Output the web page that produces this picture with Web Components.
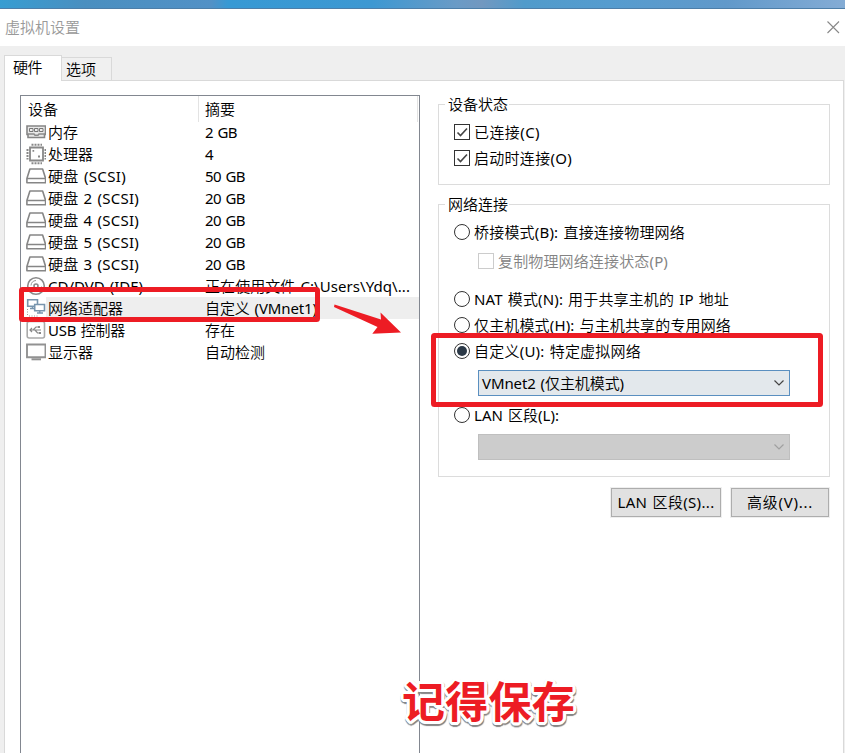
<!DOCTYPE html>
<html lang="zh-CN"><head><meta charset="utf-8"><title>虚拟机设置</title>
<style>
html,body{margin:0;width:845px;height:753px;overflow:hidden}
body{font:15px/22px "Noto Sans","Noto Sans CJK SC DemiLight","Noto Sans CJK SC",sans-serif;word-spacing:1px;color:#000;background:#efefef}
</style></head><body>
<vm-settings></vm-settings>
<script>
const define=(name,css,html,after)=>customElements.define(name,class extends HTMLElement{
  connectedCallback(){
    if(this.shadowRoot)return;
    const r=this.attachShadow({mode:'open'});
    r.innerHTML='<style>*{box-sizing:border-box}'+css+'</style>'+(typeof html==='function'?html(this):html);
    if(after)after(this,r);
  }
});
/* Text run tracked to a given width */
define('fit-text',':host{display:inline-block;white-space:pre;flex:none}span{display:inline-block}','<span><slot></slot></span>',(h,r)=>{
  const w=+h.getAttribute('w'),s=r.querySelector('span');
  if(!w)return;
  h.style.width=w+'px';
  s.style.letterSpacing=(w-s.getBoundingClientRect().width)/[...h.textContent].length+'px';
});
const icons={
mem:`<path d="M1 5h18.500v8.500h-1v3H2v-3H1z" fill="#e8e8e8" stroke="#858585" stroke-width="1.600"/><path d="M3.500 7.500h3.500v3H3.500zM8.500 7.500h3.500v3H8.500zM13.500 7.500h3.500v3h-3.500z" fill="#eee" stroke="#777"/><path d="M2 13h6l1 1.200h3l1-1.200h6" fill="none" stroke="#8b8b8b" stroke-width="1.500"/>`,
cpu:`<path d="M4 4.500h13v13H4z" fill="#fff" stroke="#888" stroke-width="1.800"/><path d="M5.500 1.700h10.500M5.500 20.300h10.500" stroke="#888" stroke-width="2" stroke-dasharray="2 1"/><path d="M1.500 6v10.500M19.500 6v10.500" stroke="#888" stroke-width="2" stroke-dasharray="2 1"/><path d="M6.500 7h1.700v1.700H6.500zM12 12.500h2v2h-2z" fill="#888"/>`,
disk:`<path d="M3.900 4h12.700l3 9.500v4.200H.900v-4.200z" fill="#fff" stroke="#868686" stroke-width="1.600" stroke-linejoin="round"/><path d="M1 13.500h18.500" stroke="#868686" stroke-width="1.500"/>`,
cd:`<circle cx="10" cy="11" r="8.300" fill="#fff" stroke="#8a8a8a" stroke-width="1.600"/><circle cx="10" cy="11" r="2" fill="none" stroke="#8a8a8a" stroke-width="1.600"/><path d="M5 10.500a5.500 5.500 0 0 1 5-5M15.500 11.500a5.500 5.500 0 0 1-5 5" fill="none" stroke="#999"/>`,
net:`<path d="M1.700 2.700h9.800v6.500H1.700z" fill="#fff" stroke="#7794ad" stroke-width="1.600"/><path d="M4 11.500h5M6.500 9v2.500" stroke="#7794ad" stroke-width="1.500"/><path d="M8.700 7.500h9.800v6.200H8.700zM11 16h6M13.700 14v2" fill="#fff" stroke="#7794ad" stroke-width="1.600"/><path d="M1.500 12v7M3 19h10" stroke="#999" stroke-dasharray="1 1.500"/>`,
usb:`<rect x="1.200" y="2.500" width="17.300" height="16.500" rx="2" fill="#fff" stroke="#aaa" stroke-width="1.600"/><path d="M4 11h11M7 11l3-3h3M9 11l2.500 3h2M6 9l-2 2 2 2" fill="none" stroke="#888" stroke-width="1.200"/><path d="M12 7h2v2h-2zM13 13h2v2h-2z" fill="#888"/>`,
mon:`<path d="M1 3.500h18.500v12.700H1z" fill="#fff" stroke="#929292" stroke-width="1.900"/><path d="M5.500 18.300h9.500" stroke="#929292" stroke-width="2"/>`};
define('device-row',`:host{display:grid;grid-template-columns:27px 157px 214px;height:22px;line-height:22px}
.i{padding-left:5px}svg{display:block}.n,.s{display:flex}:host([selected]) .n,:host([selected]) .s{background:#eee}:host([selected]) .n{margin-left:-2px;padding-left:2px}`,
h=>`<div class="i"><svg width="20" height="22" viewBox="0 0 20 22">${icons[h.getAttribute('icon')]}</svg></div><div class="n"><fit-text w="${h.getAttribute('nw')}">${h.getAttribute('name')}</fit-text></div><div class="s"><fit-text w="${h.getAttribute('sw')}">${h.getAttribute('summary')}</fit-text></div>`);
const rows=[['mem','内存',30,'2 GB',32],['cpu','处理器',45,'4',9],['disk','硬盘 (SCSI)',78,'50 GB',40],['disk','硬盘 2 (SCSI)',91,'20 GB',40],['disk','硬盘 4 (SCSI)',91,'20 GB',40],['disk','硬盘 5 (SCSI)',91,'20 GB',40],['disk','硬盘 3 (SCSI)',91,'20 GB',40],['cd','CD/DVD (IDE)',95,'正在使用文件 C:\\Users\\Ydq\\...',205],['net','网络适配器',75,'自定义 (VMnet1)',112],['usb','USB 控制器',77,'存在',30],['mon','显示器',45,'自动检测',60]];
define('device-list',`:host{display:block;width:400px;height:680px;border:1px solid #828790;background:#fff}
.h{display:grid;grid-template-columns:178px 219px;height:25px;line-height:26px}.h div{border-right:1px solid #e3e3e3;padding-left:7px}.h div+div{padding-left:6px}`,
`<div class="h"><div><fit-text w="30">设备</fit-text></div><div><fit-text w="30">摘要</fit-text></div></div>`+rows.map(r=>`<device-row icon="${r[0]}" name="${r[1]}" nw="${r[2]}" summary="${r[3]}" sw="${r[4]}" ${r[0]=='net'?'selected':''}></device-row>`).join(''));
define('title-bar',`:host{display:flex;justify-content:space-between;height:37px;padding:7px 5px 0 5px;background:#fff;color:#999}svg{margin-top:4px}`,
`<fit-text w="75">虚拟机设置</fit-text><svg width="14" height="14"><path d="M1.500 1.500l11.500 11.500M13 1.500L1.500 13" stroke="#888" stroke-width="1.100"/></svg>`);
define('tab-strip',`:host{display:flex;align-items:flex-end;height:34px;padding-left:4px}div{border:1px solid #d9d9d9}.a{width:58px;height:26px;border-bottom:0;background:#fff;padding:0 0 0 8px;z-index:1;margin-bottom:-1px}.b{width:50px;height:23px;border-left:0;border-bottom:0;padding:0 0 0 4px;background:#f0f0f0}`,
`<div class="a"><fit-text w="29">硬件</fit-text></div><div class="b"><fit-text w="30">选项</fit-text></div>`);
define('group-box',`:host{display:block;border:1px solid #dcdcdc;width:392px}.l{display:block;width:64px;background:#fff;margin:-12px 0 0 6px;padding-left:3px;height:22px}`,
h=>`<div class="l"><fit-text w="60">${h.getAttribute('legend')}</fit-text></div><slot></slot>`);
define('check-box',`:host{display:flex;align-items:center;height:26px;padding-left:15px}:host([disabled]){padding-left:39px;color:#838383}.b{width:16px;height:16px;border:1px solid #333;margin-right:4px;flex:none}:host([disabled]) .b{border-color:#ccc}svg{display:block}`,
h=>`<div class="b">${h.hasAttribute('checked')?'<svg width="14" height="14"><path d="M2.500 7.500l3 3L12 3.500" fill="none" stroke="#444" stroke-width="1.600"/></svg>':''}</div><slot></slot>`);
define('radio-button',`:host{display:flex;align-items:center;height:26px;padding-left:15px}.b{display:flex;align-items:center;justify-content:center;width:16px;height:16px;border:1px solid #333;border-radius:50%;margin-right:4px;flex:none}i{width:10px;height:10px;border-radius:50%;background:#2b3947}`,
h=>`<div class="b">${h.hasAttribute('checked')?'<i></i>':''}</div><slot></slot>`);
define('drop-down',`:host{display:flex;align-items:center;justify-content:space-between;margin-left:39px;width:312px;height:26px;border:1px solid #5a8fc0;background:#e3e8ec;padding:0 5px 0 3px;color:#000}:host([disabled]){background:#ccc;border-color:#bfbfbf}svg{margin-left:auto}`,
h=>`<slot></slot><svg width="10" height="6"><path d="M.500 .500L5 5 9.500 .500" fill="none" stroke="${h.hasAttribute('disabled')?'#a0a0a0':'#444'}" stroke-width="1.200"/></svg>`);
define('push-button',`:host{display:flex;align-items:center;justify-content:center;height:29px;border:1px solid #adadad;background:#e1e1e1;box-shadow:0 0 0 1px #efefef;padding-bottom:1px}`,'<slot></slot>');
define('mark-layer',`:host{position:absolute;inset:0;pointer-events:none}svg{position:absolute;left:0;top:0}.c{position:absolute;left:402px;top:674px;font:bold 43px/50px "Noto Sans CJK SC",sans-serif;color:#ed1c24}
.c fit-text{text-shadow:${Array.from({length:16},(_,i)=>`${(3*Math.cos(i*Math.PI/8)).toFixed(1)}px ${(3*Math.sin(i*Math.PI/8)).toFixed(1)}px 0 #fff`).join()},${Array.from({length:16},(_,i)=>`${(3*Math.cos(i*Math.PI/8)+.5).toFixed(1)}px ${(3*Math.sin(i*Math.PI/8)+1.5).toFixed(1)}px 1px #888`).join()}}`,
`<svg width="845" height="753"><g fill="none" stroke="#ed1c24" stroke-width="5"><rect x="21.500" y="289.500" width="296" height="30" rx="1"/><rect x="433.500" y="335.500" width="387" height="69" rx="1"/></g><path d="M334.500 304.500L381 319.500 380.500 312.500 401 332.500 372.300 333.700 377.500 327 334 307z" fill="#ed1c24"/></svg><div class="c"><fit-text w="173">记得保存</fit-text></div>`);
define('vm-settings',`:host{display:block;position:relative;width:845px;height:753px;overflow:hidden}
.sky{height:9px;background:linear-gradient(transparent 7.500px,#4d7ea8 8px),linear-gradient(90deg,#379dd2 0,#4a8fc0 10%,#5291c6 25%,#3799d4 27%,#3d98d2 44%,#6a9bc6 54%,#7298c0 57%,#519bcb 62%,#559ccf 72%,#6199ca 86%,#84acd5)}
.page{display:flex;gap:18px;margin-left:4px;width:840px;height:674px;border:1px solid #d9d9d9;background:#fff;padding:14px 0 0 15px}
.right{width:392px;padding-top:9px}.g1{height:81px}.g1 check-box:first-child{margin-top:4px}.g2{height:273px;margin-top:19px}
.buttons{display:flex;justify-content:flex-end;gap:10px;margin-top:11px;padding-right:1px}`,
`<div class="sky"></div><title-bar></title-bar><tab-strip></tab-strip><div class="page"><device-list></device-list><div class="right">
<group-box class="g1" legend="设备状态"><check-box checked><fit-text w="66">已连接(C)</fit-text></check-box><check-box checked><fit-text w="98">启动时连接(O)</fit-text></check-box></group-box>
<group-box class="g2" legend="网络连接"><radio-button style="margin-top:4px"><fit-text w="211">桥接模式(B): 直接连接物理网络</fit-text></radio-button>
<check-box disabled style="margin-top:3px"><fit-text w="170">复制物理网络连接状态(P)</fit-text></check-box>
<radio-button style="margin-top:12px"><fit-text w="255">NAT 模式(N): 用于共享主机的 IP 地址</fit-text></radio-button>
<radio-button><fit-text w="257">仅主机模式(H): 与主机共享的专用网络</fit-text></radio-button>
<radio-button checked><fit-text w="167">自定义(U): 特定虚拟网络</fit-text></radio-button>
<drop-down style="margin-top:6px"><fit-text w="142">VMnet2 (仅主机模式)</fit-text></drop-down>
<radio-button style="margin-top:6px"><fit-text w="85">LAN 区段(L):</fit-text></radio-button>
<drop-down disabled style="margin-top:6px"></drop-down></group-box>
<div class="buttons"><push-button style="width:110px"><fit-text w="97">LAN 区段(S)...</fit-text></push-button><push-button style="width:98px"><fit-text w="66">高级(V)...</fit-text></push-button></div>
</div></div><mark-layer></mark-layer>`);
</script></body></html>
